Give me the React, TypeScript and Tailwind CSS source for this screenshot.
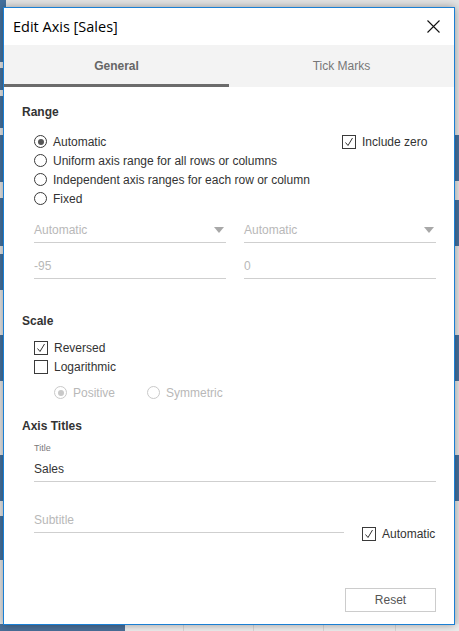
import type { ReactNode } from "react";

function Radio({ checked, disabled }: { checked?: boolean; disabled?: boolean }) {
  return (
    <span
      className={
        "flex h-[13px] w-[13px] shrink-0 items-center justify-center rounded-full border bg-white " +
        (disabled ? "border-[#c9c9c9]" : "border-[#3a3a3a]")
      }
    >
      {checked && (
        <span
          className={
            "h-[6px] w-[6px] rounded-full " + (disabled ? "bg-[#c9c9c9]" : "bg-[#555555]")
          }
        />
      )}
    </span>
  );
}

function Check({ checked }: { checked?: boolean }) {
  return (
    <span className="flex h-[14px] w-[14px] shrink-0 items-center justify-center border border-[#3a3a3a] bg-white">
      {checked && (
        <svg width="12" height="12" viewBox="0 0 12 12" fill="none">
          <path d="M2.5 6.5 L5 9.5 L9.5 2" stroke="#333" strokeWidth="1" />
        </svg>
      )}
    </span>
  );
}

function Option({
  control,
  children,
  muted,
  className = "",
}: {
  control: ReactNode;
  children: ReactNode;
  muted?: boolean;
  className?: string;
}) {
  return (
    <label
      className={
        "flex h-[19px] items-center gap-[6px] text-[12px] " +
        (muted ? "text-[#b8b8b8] " : "text-[#333333] ") +
        className
      }
    >
      {control}
      <span>{children}</span>
    </label>
  );
}

function Field({
  value,
  placeholder,
  dropdown,
  className = "",
}: {
  value?: string;
  placeholder?: string;
  dropdown?: boolean;
  className?: string;
}) {
  return (
    <div
      className={
        "flex h-[25px] items-center justify-between border-b border-[#cfcfcf] text-[12px] " +
        className
      }
    >
      <span className={value ? "text-[#333333]" : "text-[#b8b8b8]"}>{value ?? placeholder}</span>
      {dropdown && (
        <svg width="10" height="6" viewBox="0 0 10 6" className="mr-[2px]">
          <path d="M0 0 H10 L5 6 Z" fill="#a8a8a8" />
        </svg>
      )}
    </div>
  );
}

function Heading({ children, className = "" }: { children: ReactNode; className?: string }) {
  return (
    <div className={"h-[16px] text-[12px] font-bold leading-[16px] text-[#333333] " + className}>
      {children}
    </div>
  );
}

export default function App() {
  const bars = [
    [0, 62],
    [68, 90],
    [96, 128],
    [135, 182],
    [198, 246],
    [254, 290],
    [335, 381],
    [455, 501],
    [516, 560],
  ];
  const rightBars = [
    [135, 181],
    [200, 246],
    [335, 381],
    [455, 501],
  ];

  return (
    <div className="relative h-[631px] w-[459px] overflow-hidden bg-[#e3e3e3] font-['Liberation_Sans',Arial,sans-serif]">
      {/* chart behind the dialog */}
      {bars.map(([a, b]) => (
        <div
          key={a}
          className="absolute left-0 w-[6px] bg-[#44709d]"
          style={{ top: a, height: b - a }}
        />
      ))}
      {rightBars.map(([a, b]) => (
        <div
          key={a}
          className="absolute right-0 w-[6px] bg-[#44709d]"
          style={{ top: a, height: b - a }}
        />
      ))}
      <div className="absolute bottom-0 left-0 h-[7px] w-[125px] bg-[#4a6f98]" />
      <div className="absolute bottom-0 left-[125px] right-0 flex h-[7px] bg-[#ececec]">
        <div className="ml-[58px] h-full w-px bg-[#d6d6d6]" />
        <div className="ml-[69px] h-full w-px bg-[#d6d6d6]" />
        <div className="ml-[69px] h-full w-px bg-[#d6d6d6]" />
        <div className="ml-[71px] h-full w-px bg-[#d6d6d6]" />
      </div>

      <div className="relative ml-[3px] mt-[7px] flex h-[618px] w-[452px] flex-col border border-[#1a7fd4] bg-white shadow-[0_0_8px_rgba(0,0,0,0.35)]">
        <div className="flex h-[37px] shrink-0 items-center justify-between pl-[9px] pr-[14px]">
          <span className="font-['Open_Sans',sans-serif] text-[14.5px] text-black">Edit Axis [Sales]</span>
          <svg width="13" height="13" viewBox="0 0 13 13" stroke="#111" strokeWidth="1.1">
            <path d="M0.5 0.5 L12.5 12.5 M12.5 0.5 L0.5 12.5" />
          </svg>
        </div>

        <div className="grid h-[42px] shrink-0 grid-cols-2 bg-[#f3f3f3] text-[12px]">
          <div className="flex items-center justify-center border-b-[3px] border-[#6b6b6b] pt-[3px] font-bold text-[#666666]">
            General
          </div>
          <div className="flex items-center justify-center text-[#777777]">Tick Marks</div>
        </div>

        <div className="flex flex-1 flex-col px-[18px]">
          <Heading className="mt-[17px]">Range</Heading>
          <div className="mt-[12px] flex pl-[12px]">
            <div className="flex flex-1 flex-col">
              <Option control={<Radio checked />}>Automatic</Option>
              <Option control={<Radio />}>Uniform axis range for all rows or columns</Option>
              <Option control={<Radio />}>Independent axis ranges for each row or column</Option>
              <Option control={<Radio />}>Fixed</Option>
            </div>
            <div className="w-[94px]">
              <Option control={<Check checked />} className="gap-[6px]">
                Include zero
              </Option>
            </div>
          </div>

          <div className="mt-[10px] flex gap-[18px] pl-[12px]">
            <Field placeholder="Automatic" dropdown className="w-[192px]" />
            <Field placeholder="Automatic" dropdown className="w-[192px]" />
          </div>
          <div className="mt-[11px] flex gap-[18px] pl-[12px]">
            <Field placeholder="-95" className="w-[192px]" />
            <Field placeholder="0" className="w-[192px]" />
          </div>

          <Heading className="mt-[34px]">Scale</Heading>
          <div className="mt-[9px] flex flex-col pl-[12px]">
            <Option control={<Check checked />}>Reversed</Option>
            <Option control={<Check />}>Logarithmic</Option>
            <div className="mt-[7px] flex pl-[20px]">
              <Option control={<Radio checked disabled />} muted className="w-[93px]">
                Positive
              </Option>
              <Option control={<Radio disabled />} muted>
                Symmetric
              </Option>
            </div>
          </div>

          <Heading className="mt-[16px]">Axis Titles</Heading>
          <div className="mt-[8px] pl-[12px]">
            <div className="h-[12px] text-[9px] leading-[12px] text-[#7a7a7a]">Title</div>
            <Field value="Sales" className="mt-[3px]" />
            <div className="mt-[26px] flex">
              <Field placeholder="Subtitle" className="w-[310px]" />
              <div className="ml-[18px] pt-[16px]">
                <Option control={<Check checked />}>Automatic</Option>
              </div>
            </div>
          </div>

          <div className="mt-auto flex justify-end pb-[12px]">
            <button className="h-[24px] w-[91px] border border-[#cccccc] bg-white text-[12px] text-[#555555]">
              Reset
            </button>
          </div>
        </div>
      </div>
    </div>
  );
}
